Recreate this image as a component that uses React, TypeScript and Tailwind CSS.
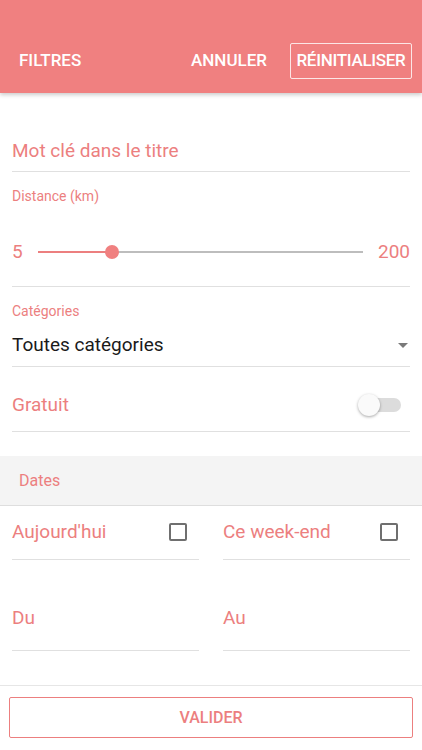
import React from 'react'

const coral = 'text-[#ec7f7f]'

function Field({ label, className = '' }: { label: string; className?: string }) {
  return (
    <div className={`border-b border-[#e0e0e0] ${className}`}>
      <span className={`block text-[19px] leading-6 ${coral}`}>{label}</span>
    </div>
  )
}

function Checkbox() {
  return <span className="block h-[18px] w-[18px] rounded-[2px] border-2 border-[#6f6f6f]" />
}

export default function App() {
  return (
    <div className="flex min-h-[750px] w-full flex-col bg-white font-['Roboto',sans-serif]">
      <header className="relative z-10 flex h-[93px] items-center justify-between bg-[#f08080] pl-[19px] pr-[10px] pt-[29px] shadow-[0_2px_4px_rgba(0,0,0,0.2)]">
        <span className="text-[17px] font-medium text-white">FILTRES</span>
        <div className="flex items-center gap-[23px]">
          <span className="text-[17px] font-medium text-white">ANNULER</span>
          <span className="flex h-[36px] w-[122px] items-center justify-center rounded-[2px] border border-white/80 text-[17px] font-medium tracking-[-0.3px] text-white">
            RÉINITIALISER
          </span>
        </div>
      </header>

      <main className="px-3">
        <Field label="Mot clé dans le titre" className="mt-[46px] pb-2" />

        <div className="border-b border-[#e0e0e0] pb-[14px]">
          <span className={`mt-[14px] block text-[14px] leading-5 ${coral}`}>Distance (km)</span>
          <div className="mt-[26px] flex h-10 items-center gap-[15px]">
            <span className={`text-[19px] ${coral}`}>5</span>
            <div className="relative h-[2px] flex-1 bg-[#bdbdbd]">
              <div className="h-full w-[23%] bg-[#ec7f7f]" />
              <span className="absolute left-[23%] top-1/2 h-[14px] w-[14px] -translate-x-1/2 -translate-y-1/2 rounded-full bg-[#f08080]" />
            </div>
            <span className={`text-[19px] ${coral}`}>200</span>
          </div>
        </div>

        <div className="border-b border-[#e0e0e0] pb-[9px]">
          <span className={`mt-[14px] block text-[14px] leading-5 ${coral}`}>Catégories</span>
          <div className="mt-3 flex items-center justify-between">
            <span className="text-[19px] leading-6 text-[#1a1a1a]">Toutes catégories</span>
            <span className="mr-[2px] h-0 w-0 border-x-[5px] border-t-[5px] border-x-transparent border-t-[#7a7a7a]" />
          </div>
        </div>

        <div className="flex items-center justify-between border-b border-[#e0e0e0] pb-[14px] pt-[26px]">
          <span className={`text-[19px] leading-6 ${coral}`}>Gratuit</span>
          <div className="relative mr-[9px] h-[14px] w-[36px] rounded-full bg-[#dcdcdc]">
            <span className="absolute -left-[7px] top-1/2 h-[22px] w-[22px] -translate-y-1/2 rounded-full bg-[#fafafa] shadow-[0_1px_3px_rgba(0,0,0,0.35)]" />
          </div>
        </div>
      </main>

      <div className="mt-[24px] flex h-[50px] items-center border-b border-[#dedede] bg-[#f4f4f4] px-[19px]">
        <span className={`text-[16px] ${coral}`}>Dates</span>
      </div>

      <div className="grid grid-cols-2 gap-x-6 px-3">
        <div className="mt-[14px] flex items-center justify-between border-b border-[#e0e0e0] pb-[15px] pr-3">
          <span className={`text-[19px] leading-6 ${coral}`}>Aujourd'hui</span>
          <Checkbox />
        </div>
        <div className="mt-[14px] flex items-center justify-between border-b border-[#e0e0e0] pb-[15px] pr-3">
          <span className={`text-[19px] leading-6 ${coral}`}>Ce week-end</span>
          <Checkbox />
        </div>
        <Field label="Du" className="mt-[46px] pb-5" />
        <Field label="Au" className="mt-[46px] pb-5" />
      </div>

      <footer className="mt-[34px] border-t border-[#e6e6e6] px-[9px] pt-[11px]">
        <button className="flex h-[41px] w-full items-center justify-center rounded-[2px] border border-[#ec7f7f] text-[16px] font-medium text-[#ec7f7f]">
          VALIDER
        </button>
      </footer>
    </div>
  )
}
